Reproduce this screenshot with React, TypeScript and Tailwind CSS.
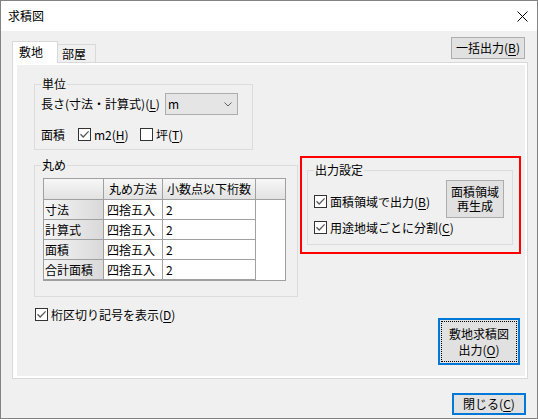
import React from "react";

function Mn({ c }: { c: string }) {
  return (
    <span>
      (<span className="underline underline-offset-[2px]">{c}</span>)
    </span>
  );
}

function Box({ on }: { on?: boolean }) {
  return (
    <span className="flex h-[13px] w-[13px] shrink-0 items-center justify-center border border-[#333333] bg-white">
      {on && (
        <svg width="11" height="11" viewBox="0 0 11 11">
          <path d="M1.5 5.2L4.2 8L9.6 2.4" fill="none" stroke="#5a5a5a" strokeWidth="1.3" />
        </svg>
      )}
    </span>
  );
}

function Group({
  label,
  className,
  children,
}: {
  label: string;
  className: string;
  children?: React.ReactNode;
}) {
  return (
    <div className={"relative border border-[#dcdcdc] " + className}>
      <span className="absolute left-[6px] top-[-8px] bg-[#f0f0f0] px-[1px] leading-[14px]">{label}</span>
      {children}
    </div>
  );
}

const rows = ["寸法", "計算式", "面積", "合計面積"];

export default function App() {
  return (
    <div className="flex h-[419px] w-[538px] flex-col overflow-hidden border border-[#838383] bg-[#f0f0f0] font-['Noto_Sans_CJK_JP','Noto_Sans',sans-serif] text-[12px] text-black">
      {/* title bar */}
      <div className="flex h-[30px] shrink-0 items-center bg-white">
        <span className="ml-[7px] leading-[14px]">求積図</span>
        <svg className="ml-auto mr-[9px]" width="11" height="11" viewBox="0 0 11 11">
          <path d="M0.5 0.5L10.5 10.5M10.5 0.5L0.5 10.5" stroke="#000" strokeWidth="1" />
        </svg>
      </div>

      {/* body */}
      <div className="flex flex-1 flex-col">
        {/* tabs row */}
        <div className="mt-[6px] flex h-[25px] shrink-0">
          <div className="ml-[11px] flex items-end">
            <div className="relative z-10 mb-[-1px] h-[22px] w-[46px] border-l border-r border-t border-[#d9d9d9] bg-white pl-[6px] leading-[20px]">
              敷地
            </div>
            <div className="h-[18px] w-[38px] border-r border-t border-[#d9d9d9] bg-[#f0f0f0] pl-[4px] leading-[17px]">
              部屋
            </div>
          </div>
          <div className="ml-auto mr-[12px] flex h-[22px] w-[74px] items-center justify-center self-start border border-[#adadad] bg-[#e1e1e1] leading-[14px]">
            一括出力<Mn c="B" />
          </div>
        </div>

        {/* tab panel */}
        <div className="ml-[11px] flex h-[317px] w-[516px] shrink-0 flex-col border border-[#d9d9d9] bg-white">
          <div className="mb-[2px] ml-[4px] mr-[2px] mt-[2px] flex flex-1 flex-col bg-[#f0f0f0]">
            {/* 単位 */}
            <Group label="単位" className="ml-[17px] mt-[19px] h-[66px] w-[219px] shrink-0">
              <div className="ml-[6px] mt-[8px] flex h-[22px] items-center">
                <span className="w-[124px] whitespace-nowrap leading-[14px]">
                  長さ(寸法・計算式)<Mn c="L" />
                </span>
                <div className="flex h-[22px] w-[73px] items-center border border-[#adadad] bg-[#e5e5e5] pl-[2px] pr-[5px]">
                  <span className="leading-[14px]">m</span>
                  <svg className="ml-auto" width="8" height="5" viewBox="0 0 8 5">
                    <path d="M0.5 0.5L4 4L7.5 0.5" fill="none" stroke="#606060" strokeWidth="1" />
                  </svg>
                </div>
              </div>
              <div className="ml-[6px] mt-[13px] flex h-[13px] items-center">
                <span className="w-[37px] leading-[14px]">面積</span>
                <Box on />
                <span className="ml-[3px] w-[46px] leading-[14px]">
                  m2<Mn c="H" />
                </span>
                <Box />
                <span className="ml-[3px] leading-[14px]">
                  坪<Mn c="T" />
                </span>
              </div>
            </Group>

            {/* row 2 */}
            <div className="mt-[6px] flex shrink-0 items-start">
              <Group label="丸め" className="ml-[17px] mt-[9px] h-[132px] w-[264px] shrink-0">
                <div className="ml-[8px] mt-[12px] flex h-[103px] w-[243px] flex-col border border-[#a0a0a0] bg-white">
                  <div className="flex h-[21px] shrink-0">
                    <div className="w-[60px] border-b border-r border-[#a0a0a0] bg-gradient-to-b from-[#f7f7f7] to-[#e2e2e2]" />
                    <div className="flex w-[59px] items-center justify-center border-b border-r border-[#a0a0a0] bg-gradient-to-b from-[#f7f7f7] to-[#e2e2e2] leading-[14px]">
                      丸め方法
                    </div>
                    <div className="flex w-[93px] items-center justify-center border-b border-r border-[#a0a0a0] bg-gradient-to-b from-[#f7f7f7] to-[#e2e2e2] leading-[14px]">
                      小数点以下桁数
                    </div>
                    <div className="flex-1 border-b border-[#a0a0a0] bg-gradient-to-b from-[#f7f7f7] to-[#e2e2e2]" />
                  </div>
                  {rows.map((r) => (
                    <div key={r} className="flex h-[20px] shrink-0">
                      <div className="flex w-[60px] items-center border-b border-r border-[#a0a0a0] bg-gradient-to-r from-[#f6f6f6] to-[#d9d9d9] pl-[1px] leading-[14px]">
                        {r}
                      </div>
                      <div className="flex w-[59px] items-center border-b border-r border-[#a0a0a0] pl-[3px] leading-[14px]">
                        四捨五入
                      </div>
                      <div className="flex w-[93px] items-center border-b border-r border-[#a0a0a0] pl-[3px] leading-[14px]">
                        2
                      </div>
                    </div>
                  ))}
                </div>
              </Group>

              {/* 出力設定 red box */}
              <div className="ml-[2px] h-[98px] w-[221px] shrink-0 border-2 border-[#ff0000]">
                <Group label="出力設定" className="ml-[5px] mt-[12px] flex h-[75px] w-[206px]">
                  <div className="flex w-[138px] flex-col pl-[6px] pt-[24px]">
                    <div className="flex h-[13px] items-center">
                      <Box on />
                      <span className="ml-[3px] whitespace-nowrap leading-[14px]">
                        面積領域で出力<Mn c="B" />
                      </span>
                    </div>
                    <div className="mt-[13px] flex h-[13px] items-center">
                      <Box on />
                      <span className="ml-[3px] whitespace-nowrap leading-[14px]">
                        用途地域ごとに分割<Mn c="C" />
                      </span>
                    </div>
                  </div>
                  <div className="mt-[9px] flex h-[38px] w-[58px] items-center justify-center border border-[#adadad] bg-[#e1e1e1]">
                    <span className="text-center leading-[14px]">
                      面積領域
                      <br />
                      再生成
                    </span>
                  </div>
                </Group>
              </div>
            </div>

            {/* row 3 */}
            <div className="mt-[11px] flex shrink-0 items-start">
              <div className="ml-[18px] flex h-[13px] items-center">
                <Box on />
                <span className="ml-[3px] whitespace-nowrap leading-[14px]">
                  桁区切り記号を表示<Mn c="D" />
                </span>
              </div>
              <div className="ml-auto mr-[5px] mt-[10px] flex h-[47px] w-[82px] items-center justify-center border-2 border-[#0078d7] bg-[#e1e1e1]">
                <div className="flex h-[41px] w-[76px] items-center justify-center border border-dotted border-black">
                  <span className="text-center leading-[16px]">
                    敷地求積図
                    <br />
                    出力<Mn c="O" />
                  </span>
                </div>
              </div>
            </div>
          </div>
        </div>

        {/* bottom */}
        <div className="mt-[14px] flex shrink-0">
          <div className="ml-auto mr-[11px] flex h-[22px] w-[74px] items-center justify-center border-2 border-[#0078d7] bg-[#e1e1e1] leading-[14px]">
            閉じる<Mn c="C" />
          </div>
        </div>
      </div>
    </div>
  );
}
